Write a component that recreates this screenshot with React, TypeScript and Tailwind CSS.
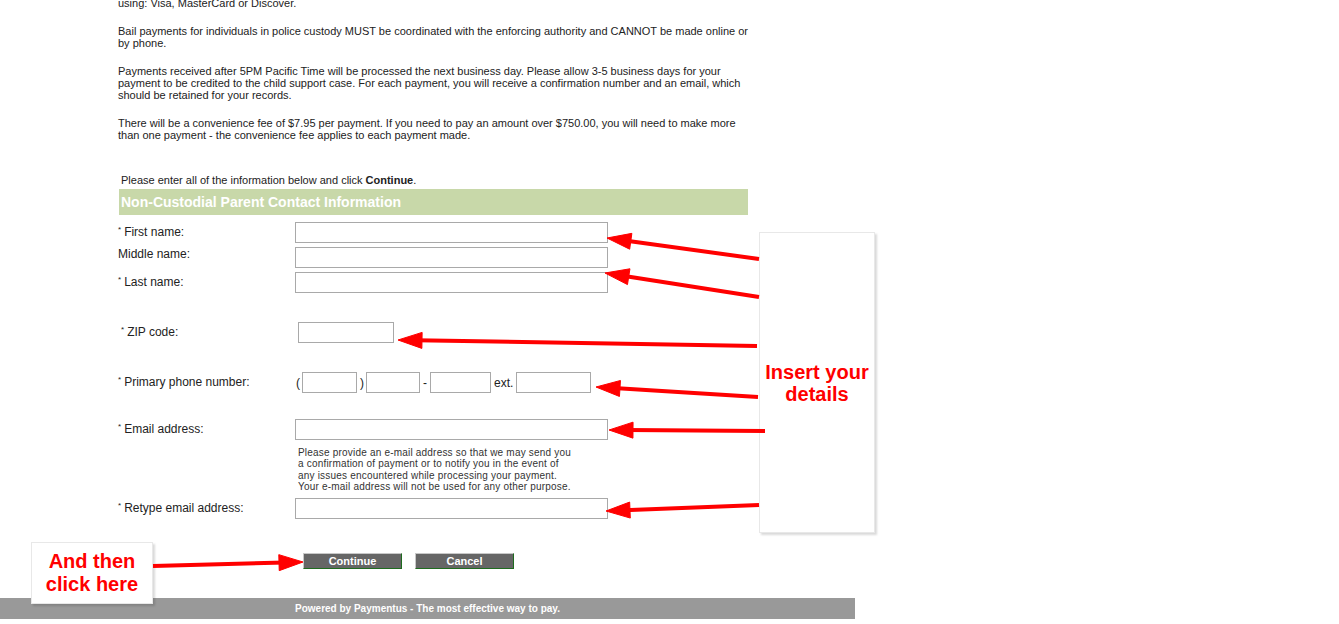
import React from 'react';

type Arrow = { x1: number; y1: number; x2: number; y2: number };

// tail (x1,y1) -> tip (x2,y2)
const arrows: Arrow[] = [
  { x1: 759, y1: 259, x2: 607, y2: 238 },
  { x1: 759, y1: 297, x2: 605, y2: 273 },
  { x1: 757, y1: 346, x2: 398, y2: 340 },
  { x1: 758, y1: 397, x2: 596, y2: 387 },
  { x1: 765, y1: 431, x2: 609, y2: 430 },
  { x1: 759, y1: 505, x2: 606, y2: 511 },
  { x1: 153, y1: 566, x2: 303, y2: 562 },
];

const headPoints = ({ x1, y1, x2, y2 }: Arrow) => {
  const len = Math.hypot(x2 - x1, y2 - y1);
  const ux = (x2 - x1) / len;
  const uy = (y2 - y1) / len;
  const hl = 24;
  const hw = 8;
  const bx = x2 - ux * hl;
  const by = y2 - uy * hl;
  return `${x2},${y2} ${bx - uy * hw},${by + ux * hw} ${bx + uy * hw},${by - ux * hw}`;
};

const Star = () => <span className="relative -top-[4px] mr-[3px] text-[8px]">*</span>;

const TextInput = ({ className = 'w-[313px]' }: { className?: string }) => (
  <input type="text" className={`h-[21px] border border-[#a9a9a9] bg-white ${className}`} />
);

const Row = ({ children, label, mt }: { children: React.ReactNode; label: React.ReactNode; mt: string }) => (
  <div className={`flex h-[21px] items-center text-[12px] leading-[14px] ${mt}`}>
    <div className="w-[177px] shrink-0">{label}</div>
    {children}
  </div>
);

export default function App() {
  return (
    <div className="relative min-h-[624px] overflow-hidden bg-white font-['Liberation_Sans',Arial,sans-serif] text-[11px] leading-[12px] text-[#222]">
      <div className="w-[855px]">
        <div className="ml-[118px] w-[630px]">
          <p className="-mt-[3px] mb-4">using: Visa, MasterCard or Discover.</p>
          <p className="mb-4">
            Bail payments for individuals in police custody MUST be coordinated with the enforcing authority and CANNOT be made online or by phone.
          </p>
          <p className="mb-4">
            Payments received after 5PM Pacific Time will be processed the next business day. Please allow 3-5 business days for your payment to be credited to the child support case. For each payment, you will receive a confirmation number and an email, which should be retained for your records.
          </p>
          <p>
            There will be a convenience fee of $7.95 per payment. If you need to pay an amount over $750.00, you will need to make more than one payment - the convenience fee applies to each payment made.
          </p>

          <p className="mt-[33px] ml-[3px]">
            Please enter all of the information below and click <b>Continue</b>.
          </p>
          <div className="mt-[3px] ml-[1px] h-[26px] w-[629px] bg-[#c8d8a9] pl-[2px] text-[14px] font-bold leading-[26px] text-white">
            Non-Custodial Parent Contact Information
          </div>

          <Row mt="mt-[7px]" label={<><Star />First name:</>}>
            <TextInput />
          </Row>
          <Row mt="mt-[4px]" label={<span className="relative -top-[4px]">Middle name:</span>}>
            <TextInput />
          </Row>
          <Row mt="mt-[4px]" label={<><Star />Last name:</>}>
            <TextInput />
          </Row>
          <Row mt="mt-[29px]" label={<span className="pl-[3px]"><Star />ZIP code:</span>}>
            <TextInput className="ml-[3px] w-[96px]" />
          </Row>
          <Row mt="mt-[29px]" label={<><Star />Primary phone number:</>}>
            <span className="ml-[1px]">(</span>
            <TextInput className="ml-[2px] w-[55px]" />
            <span className="ml-[3px]">)</span>
            <TextInput className="ml-[2px] w-[54px]" />
            <span className="ml-[3px]">-</span>
            <TextInput className="ml-[3px] w-[61px]" />
            <span className="ml-[3px]">ext.</span>
            <TextInput className="ml-[3px] w-[75px]" />
          </Row>
          <Row mt="mt-[26px]" label={<><Star />Email address:</>}>
            <TextInput />
          </Row>
          <p className="mt-[7px] ml-[180px] text-[10px] leading-[11.3px] tracking-[0.2px] text-[#333]">
            Please provide an e-mail address so that we may send you
            <br />a confirmation of payment or to notify you in the event of
            <br />any issues encountered while processing your payment.
            <br />Your e-mail address will not be used for any other purpose.
          </p>
          <Row mt="mt-[6px]" label={<><Star />Retype email address:</>}>
            <TextInput />
          </Row>

          <div className="mt-[34px] ml-[185px] flex">
            <button className="h-[16px] w-[99px] border border-t-[#c8c8c8] border-l-[#c8c8c8] border-r-[#1e6b1e] border-b-[#1e6b1e] bg-[#666] text-[11px] font-bold leading-[13px] text-white">
              Continue
            </button>
            <button className="ml-[13px] h-[16px] w-[99px] border border-t-[#c8c8c8] border-l-[#c8c8c8] border-r-[#1e6b1e] border-b-[#1e6b1e] bg-[#666] text-[11px] font-bold leading-[13px] text-white">
              Cancel
            </button>
          </div>
        </div>

        <div className="mt-[29px] h-[21px] bg-[#999] text-center text-[10px] font-bold leading-[21px] text-white">
          Powered by Paymentus - The most effective way to pay.
        </div>
      </div>

      {/* annotation callouts */}
      <div className="absolute left-[759px] top-[232px] flex h-[301px] w-[116px] items-center justify-center border border-[#e8e8e8] bg-white text-center text-[20px] font-bold leading-[22px] text-[#f00] shadow-[2px_2px_2px_rgba(0,0,0,0.15)]">
        Insert your
        <br />
        details
      </div>
      <div className="absolute left-[31px] top-[542px] flex h-[62px] w-[122px] items-center justify-center border border-[#e8e8e8] bg-white text-center text-[20px] font-bold leading-[23px] text-[#f00] shadow-[2px_2px_2px_rgba(0,0,0,0.15)]">
        And then
        <br />
        click here
      </div>

      <svg className="pointer-events-none absolute left-0 top-0" width="1339" height="624">
        {arrows.map((a, i) => {
          const len = Math.hypot(a.x2 - a.x1, a.y2 - a.y1);
          const ex = a.x2 - ((a.x2 - a.x1) / len) * 18;
          const ey = a.y2 - ((a.y2 - a.y1) / len) * 18;
          return (
            <g key={i} fill="#f00" stroke="#f00">
              <line x1={a.x1} y1={a.y1} x2={ex} y2={ey} strokeWidth={4} />
              <polygon points={headPoints(a)} strokeWidth={1} />
            </g>
          );
        })}
      </svg>
    </div>
  );
}
